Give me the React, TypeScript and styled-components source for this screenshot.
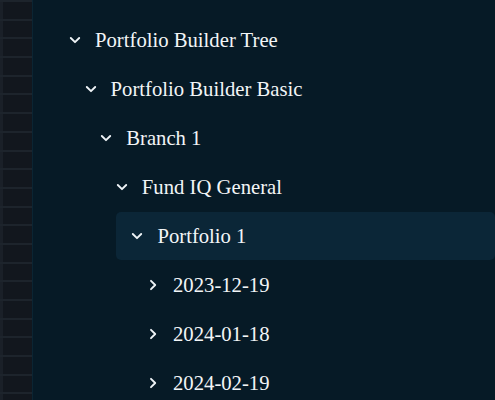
import React from 'react';
import styled, { createGlobalStyle } from 'styled-components';

const GlobalStyle = createGlobalStyle`
  html, body {
    margin: 0;
    padding: 0;
    background: #061a26;
    overflow: hidden;
  }
`;

type Node = { label: string; level: number; open: boolean; active?: boolean };

const nodes: Node[] = [
  { label: 'Portfolio Builder Tree', level: 0, open: true },
  { label: 'Portfolio Builder Basic', level: 1, open: true },
  { label: 'Branch 1', level: 2, open: true },
  { label: 'Fund IQ General', level: 3, open: true },
  { label: 'Portfolio 1', level: 4, open: true, active: true },
  { label: '2023-12-19', level: 5, open: false },
  { label: '2024-01-18', level: 5, open: false },
  { label: '2024-02-19', level: 5, open: false },
];

const Chevron = ({ open }: { open: boolean }) => (
  <svg width="12" height="12" viewBox="0 0 12 12" fill="none">
    {open ? (
      <path d="M1.8 4 L6 8.2 L10.2 4" stroke="#eef3f6" strokeWidth="1.9" strokeLinecap="round" strokeLinejoin="round" />
    ) : (
      <path d="M4 1.8 L8.2 6 L4 10.2" stroke="#eef3f6" strokeWidth="1.9" strokeLinecap="round" strokeLinejoin="round" />
    )}
  </svg>
);

const App = () => {
  return (
    <Page>
      <GlobalStyle />
      <Rail>
        {Array.from({ length: 22 }).map((_, i) => (
          <RailRow key={i} />
        ))}
      </Rail>
      <Tree>
        {nodes.map((n) => (
          <Row key={n.label} $level={n.level} $active={n.active}>
            <Toggle>
              <Chevron open={n.open} />
            </Toggle>
            <Label>{n.label}</Label>
          </Row>
        ))}
      </Tree>
    </Page>
  );
};

const Page = styled.div`
  display: flex;
  width: 495px;
  height: 400px;
  background: #061a26;
  overflow: hidden;
`;

const Rail = styled.div`
  width: 32px;
  flex-shrink: 0;
  display: flex;
  flex-direction: column;
  background: #11161d;
  border-right: 1px solid #0b2533;
`;

const RailRow = styled.div`
  height: 16.7px;
  flex-shrink: 0;
  border-top: 2px solid #1d242c;
  background: linear-gradient(to right, #1a2028 0 3px, #12171e 3px);
`;

const Tree = styled.div`
  flex: 1;
  display: flex;
  flex-direction: column;
  gap: 1px;
  padding: 16px 0 0 21px;
`;

const Row = styled.div<{ $level: number; $active?: boolean }>`
  display: flex;
  align-items: center;
  height: 48px;
  flex-shrink: 0;
  margin-left: ${(p) => p.$level * 15.6}px;
  padding-left: 14px;
  gap: 13px;
  border-radius: 5px;
  background: ${(p) => (p.$active ? '#0b2637' : 'transparent')};
`;

const Toggle = styled.span`
  display: flex;
  align-items: center;
  justify-content: center;
  width: 14px;
  height: 14px;
`;

const Label = styled.span`
  font-family: "Liberation Serif", "Times New Roman", serif;
  font-size: 20.7px;
  color: #f2f5f7;
  white-space: nowrap;
`;

export default App;
